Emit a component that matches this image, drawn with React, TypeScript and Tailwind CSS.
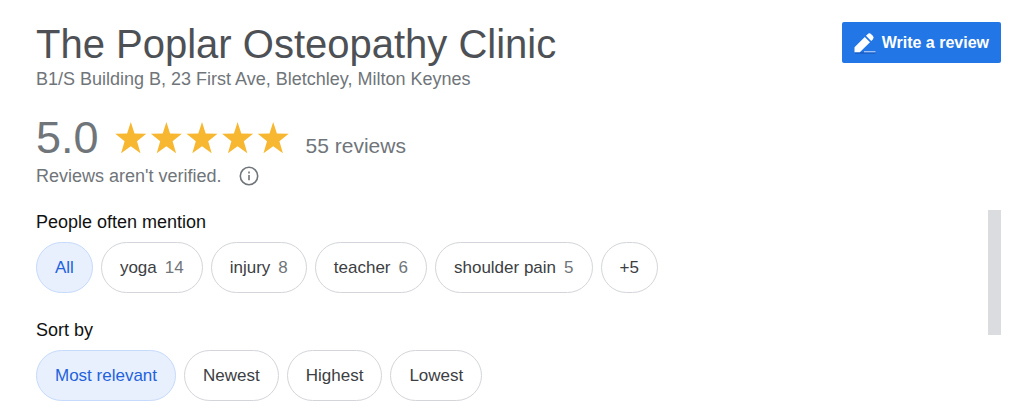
import clsx from "clsx";

const topics = [
  { label: "All" },
  { label: "yoga", count: 14 },
  { label: "injury", count: 8 },
  { label: "teacher", count: 6 },
  { label: "shoulder pain", count: 5 },
  { label: "+5" },
];

const sortOptions = [
  { label: "Most relevant" },
  { label: "Newest" },
  { label: "Highest" },
  { label: "Lowest" },
];

type ChipProps = {
  label: string;
  count?: number;
  active?: boolean;
};

function Chip({ label, count, active = false }: ChipProps) {
  return (
    <button
      type="button"
      aria-pressed={active}
      className={clsx(
        "flex h-[51px] items-center gap-2 whitespace-nowrap rounded-full border px-[18px] text-[17px]",
        active
          ? "border-[#c6dafb] bg-[#e8f0fe] text-[#1f62dc]"
          : "border-[#d3d5d9] bg-white text-[#3c4043]"
      )}
    >
      {label}
      {count !== undefined && <span className="text-[#70757a]">{count}</span>}
    </button>
  );
}

function ChipGroup({ title, items }: { title: string; items: ChipProps[] }) {
  return (
    <div role="group" aria-label={title}>
      <h2 className="mb-2 text-[18px] leading-6 text-[#111111]">{title}</h2>
      <div className="flex flex-wrap gap-2">
        {items.map((item, i) => (
          <Chip key={item.label} {...item} active={i === 0} />
        ))}
      </div>
    </div>
  );
}

function Stars() {
  return (
    <svg
      viewBox="0 0 174 32"
      className="h-8 w-[174px] shrink-0"
      fill="#f7b731"
      role="img"
      aria-label="Rated 5.0 out of 5"
    >
      {[0, 35.6, 71.2, 106.8, 142.4].map((x) => (
        <path
          key={x}
          transform={`translate(${x} 0)`}
          d="M15.8 0l3.7 11.6 11.8.2-9.3 7.4 3.5 12-9.7-7-9.7 7 3.5-12L.3 11.8l11.8-.2z"
        />
      ))}
    </svg>
  );
}

function PencilIcon() {
  return (
    <svg viewBox="0 0 24 24" className="size-6 shrink-0" aria-hidden="true">
      <path d="M2 22h20.5" stroke="#1a55b8" strokeWidth="1.2" />
      <path d="M11 20.7h11.5" stroke="#a9c9f8" strokeWidth="1.2" />
      <path
        fill="#fff"
        d="M1.5 21.3v-5L11.8 6l5.2 5.2L6.8 21.3zM13 4.8l1.6-1.6a2.6 2.6 0 0 1 3.6 0l1.6 1.6a2.6 2.6 0 0 1 0 3.6L18.2 10z"
      />
    </svg>
  );
}

function InfoIcon() {
  return (
    <svg viewBox="0 0 20 20" className="size-5" fill="none" aria-hidden="true">
      <circle cx="10" cy="10" r="8.7" stroke="#70757a" strokeWidth="1.6" />
      <path d="M10 9v5.2M10 5.6v1.8" stroke="#70757a" strokeWidth="1.6" />
    </svg>
  );
}

export default function App() {
  return (
    <main className="bg-white pt-[22px] pr-[23px] pb-5 pl-9 font-['Liberation_Sans',Arial,sans-serif] text-[#70757a]">
      <header className="flex items-start justify-between gap-6">
        <div>
          <h1 className="text-[40px] leading-[45px] text-[#4d5156]">
            The Poplar Osteopathy Clinic
          </h1>
          <p className="text-[18px] leading-6">
            B1/S Building B, 23 First Ave, Bletchley, Milton Keynes
          </p>
        </div>
        <button
          type="button"
          className="flex h-[41px] shrink-0 items-center gap-[5px] rounded-xs bg-[#2376e5] pr-3 pl-[11px] text-[16px] font-bold text-white"
        >
          <PencilIcon />
          Write a review
        </button>
      </header>

      <section className="mt-[23px]">
        <div className="flex items-baseline gap-[17px]">
          <div className="flex items-center gap-4">
            <span className="text-[45px] leading-[48px]">5.0</span>
            <Stars />
          </div>
          <span className="text-[21px]">55 reviews</span>
        </div>
        <div className="mt-[2px] flex items-center gap-[17px]">
          <p className="text-[18px] leading-6">Reviews aren't verified.</p>
          <button type="button" aria-label="About these reviews">
            <InfoIcon />
          </button>
        </div>
      </section>

      <section className="mt-[22px] flex items-start justify-between gap-6">
        <div className="flex flex-col gap-[25px]">
          <ChipGroup title="People often mention" items={topics} />
          <ChipGroup title="Sort by" items={sortOptions} />
        </div>
        {/* scroll thumb */}
        <div className="h-[125px] w-[13px] shrink-0 bg-[#dadce0]" />
      </section>
    </main>
  );
}
